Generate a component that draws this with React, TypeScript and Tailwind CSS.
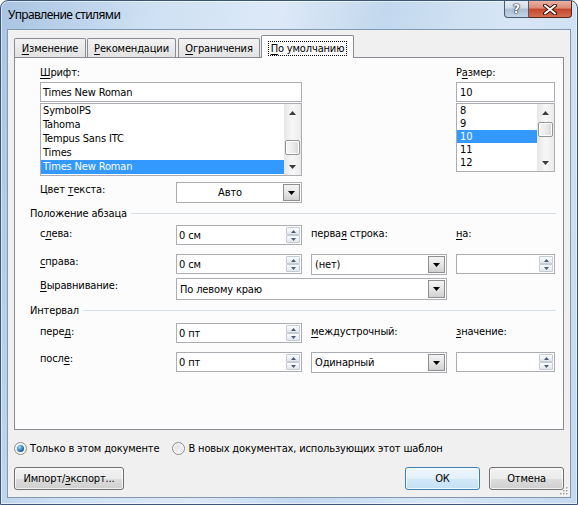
import React from 'react';

const F = "font-['DejaVu_Sans_Condensed','Liberation_Sans',sans-serif]";

function U({ children }: { children: React.ReactNode }) {
  return <span className="underline decoration-1 underline-offset-[2px]">{children}</span>;
}

function Tri({ up, w = 7, h = 4, color = '#000' }: { up?: boolean; w?: number; h?: number; color?: string }) {
  return (
    <svg width={w} height={h} viewBox={`0 0 ${w} ${h}`}>
      <path d={up ? `M${w / 2} 0L${w} ${h}H0z` : `M0 0H${w}L${w / 2} ${h}z`} fill={color} />
    </svg>
  );
}

function SpinBtn({ up }: { up?: boolean }) {
  return (
    <div className="flex-1 border border-[#c3cbd6] rounded-[1px] bg-gradient-to-b from-[#fbfcfd] to-[#e2e7ed] flex items-center justify-center">
      <Tri up={up} w={5} h={3} color="#4c5b7a" />
    </div>
  );
}

function Spin({ value, w }: { value?: string; w: string }) {
  return (
    <div className={`${w} h-[20px] border border-[#abadb3] bg-white flex`}>
      <div className="flex-1 pl-[2px] flex items-center leading-[13px]">{value}</div>
      <div className="w-[15px] flex flex-col p-[1px] pl-0">
        <SpinBtn up />
        <SpinBtn />
      </div>
    </div>
  );
}

function Combo({ value, w, h, center }: { value: string; w: string; h: string; center?: boolean }) {
  return (
    <div className={`${w} ${h} border border-[#abadb3] bg-white flex`}>
      <div className={`flex-1 flex items-center px-[3px] leading-[13px] ${center ? 'justify-center' : ''}`}>{value}</div>
      <div className="w-[17px] m-[1px] ml-0 border border-[#8e8f8f] bg-gradient-to-b from-[#f4f4f4] via-[#e6e6e6] to-[#d0d0d0] flex items-center justify-center">
        <Tri w={7} h={4} />
      </div>
    </div>
  );
}

function Scroll({ thumb }: { thumb: string }) {
  return (
    <div className="w-[17px] flex flex-col bg-gradient-to-r from-[#e6e6e6] via-[#f7f7f7] to-[#ebebeb]">
      <div className="h-[17px] flex items-center justify-center">
        <Tri up w={7} h={4} color="#3d3d3d" />
      </div>
      <div className="flex-1 relative">
        <div className={`absolute left-[1px] right-[1px] ${thumb} rounded-[2px] border border-[#959595] bg-gradient-to-r from-[#f6f6f6] via-[#ececec] to-[#d5d5d5] shadow-[inset_0_0_0_1px_#ffffff]`} />
      </div>
      <div className="h-[17px] flex items-center justify-center">
        <Tri w={7} h={4} color="#3d3d3d" />
      </div>
    </div>
  );
}

function Radio({ checked }: { checked?: boolean }) {
  return (
    <span className="w-[13px] h-[13px] rounded-full border border-[#8b8b8b] bg-gradient-to-br from-[#dcdcdc] to-[#fbfbfb] flex items-center justify-center shadow-[inset_0_0_0_1px_#ffffff]">
      {checked && (
        <span className="w-[7px] h-[7px] rounded-full bg-[radial-gradient(circle_at_35%_30%,#9adcff,#2a78b8_55%,#0c3b66)]" />
      )}
    </span>
  );
}

function Btn({ children, w, def }: { children: React.ReactNode; w: string; def?: boolean }) {
  return (
    <div
      className={`${w} h-[23px] rounded-[3px] border flex items-center justify-center leading-[13px] shadow-[inset_0_0_0_1px_rgba(255,255,255,0.75)] ${
        def
          ? 'border-[#3c7fb1] bg-[linear-gradient(#eef7fe,#e2f0fb_50%,#d1e8f8_50%,#c6e1f5)]'
          : 'border-[#707070] bg-[linear-gradient(#f2f2f2,#ebebeb_50%,#dddddd_50%,#cfcfcf)]'
      }`}
    >
      {children}
    </div>
  );
}

function Tab({ children, w, ml, selected }: { children: React.ReactNode; w: string; ml: string; selected?: boolean }) {
  if (selected) {
    return (
      <div className={`${w} ${ml} h-[23px] -mb-px relative z-10 border border-b-0 border-[#898c95] rounded-t-[2px] bg-[#fcfcfc] flex items-start justify-center pt-[5px]`}>
        <span className="border border-dotted border-[#000] px-[2px] leading-[13px]">{children}</span>
      </div>
    );
  }
  return (
    <div className={`${w} ${ml} h-[19px] border border-b-0 border-[#898c95] rounded-t-[2px] bg-gradient-to-b from-[#f3f3f3] to-[#e2e2e2] flex items-center justify-center leading-[13px]`}>
      {children}
    </div>
  );
}

const fonts = ['SymbolPS', 'Tahoma', 'Tempus Sans ITC', 'Times', 'Times New Roman'];
const sizes = ['8', '9', '10', '11', '12'];

export default function App() {
  return (
    <div className={`${F} text-[11px] tracking-[-0.15px] text-black w-[578px] h-[505px] bg-white`}>
      <div className="w-[578px] h-[505px] rounded-t-[8px] border border-[#3a5678] bg-[linear-gradient(100deg,#a9c4e2_0%,#cde0f3_22%,#dde9f7_42%,#c2d8ee_58%,#d8e7f6_78%,#c4d9ef_100%)] shadow-[inset_0_0_0_1px_rgba(255,255,255,0.55)] flex flex-col">
        {/* Title bar */}
        <div className="h-[28px] flex items-start">
          <div className="h-[28px] pl-[7px] pb-[1px] flex items-center font-['Noto_Sans',sans-serif] text-[12px] tracking-[-0.6px] text-black">Управление стилями</div>
          <div className="ml-auto mr-[5px] flex">
            <div className="w-[25px] h-[17px] rounded-bl-[4px] border border-t-0 border-[#4b5b70] bg-[linear-gradient(#e5edf6,#cfdbe8_45%,#a9bdd3_50%,#c3d5e8)] flex items-center justify-center">
              <span className="font-['DejaVu_Sans',sans-serif] font-bold text-[12px] leading-[12px] text-white [text-shadow:0_0_1px_#223,0_0_1px_#223,0_0_2px_#334]">?</span>
            </div>
            <div className="w-[43px] h-[17px] rounded-br-[4px] border border-l-0 border-t-0 border-[#5a2418] bg-[linear-gradient(#eab1a3,#dc8a77_45%,#c4452b_50%,#d36f52)] flex items-center justify-center">
              <svg width="14" height="11" viewBox="0 0 14 11">
                <path d="M2 1.5L12 9.5M12 1.5L2 9.5" stroke="#3a1208" strokeWidth="4" strokeLinecap="round" />
                <path d="M2 1.5L12 9.5M12 1.5L2 9.5" stroke="#ffffff" strokeWidth="2" strokeLinecap="round" />
              </svg>
            </div>
          </div>
        </div>

        {/* Client area */}
        <div className="flex-1 mx-[6px] mb-[6px] border border-[#8298b0] bg-[#f0f0f0] relative pt-[5px] pl-[6px] pr-[6px] flex flex-col">
          {/* Tabs */}
          <div className="h-[22px] flex items-end">
            <Tab w="w-[72px]" ml="ml-0">
              <U>И</U>зменение
            </Tab>
            <Tab w="w-[89px]" ml="ml-[1px]">
              <U>Р</U>екомендации
            </Tab>
            <Tab w="w-[82px]" ml="ml-[2px]">
              <U>О</U>граничения
            </Tab>
            <Tab w="w-[93px]" ml="ml-[1px]" selected>
              <U>П</U>о умолчанию
            </Tab>
          </div>

          {/* Panel */}
          <div className="w-[550px] h-[373px] border border-[#898c95] bg-[#fcfcfc] pl-[15px] pr-[7px] pt-[8px] flex flex-col">
            {/* Font + size */}
            <div className="flex ml-[10px]">
              <div className="w-[262px] flex flex-col">
                <div className="h-[13px] leading-[13px]">
                  <U>Ш</U>рифт:
                </div>
                <div className="mt-[3px] h-[20px] border border-[#abadb3] bg-white pl-[2px] flex items-center leading-[13px]">Times New Roman</div>
                <div className="mt-[1px] h-[73px] border border-[#abadb3] bg-white flex">
                  <div className="flex-1 flex flex-col">
                    {fonts.map((f) => (
                      <div key={f} className={`h-[14px] leading-[14px] pl-[2px] ${f === 'Times New Roman' ? 'bg-[#3399ff] text-white' : ''}`}>
                        {f}
                      </div>
                    ))}
                  </div>
                  <Scroll thumb="top-[19px] h-[15px]" />
                </div>
              </div>
              <div className="ml-[154px] w-[99px] flex flex-col">
                <div className="h-[13px] leading-[13px]">
                  Р<U>а</U>змер:
                </div>
                <div className="mt-[3px] h-[20px] border border-[#abadb3] bg-white pl-[3px] flex items-center leading-[13px]">10</div>
                <div className="mt-[1px] h-[69px] border border-[#abadb3] bg-white flex">
                  <div className="flex-1 flex flex-col">
                    {sizes.map((s) => (
                      <div key={s} className={`h-[13px] leading-[13px] pl-[3px] ${s === '10' ? 'bg-[#3399ff] text-white' : ''}`}>
                        {s}
                      </div>
                    ))}
                  </div>
                  <Scroll thumb="top-[1px] h-[15px]" />
                </div>
              </div>
            </div>

            {/* Text colour */}
            <div className="mt-[6px] ml-[10px] flex items-start">
              <div className="w-[136px] mt-[1px] leading-[13px]">
                Цвет <U>т</U>екста:
              </div>
              <Combo value="Авто" w="w-[126px]" h="h-[21px]" center />
            </div>

            {/* Paragraph position */}
            <div className="mt-[4px] h-[13px] flex items-center">
              <span className="leading-[13px]">Положение абзаца</span>
              <div className="flex-1 ml-[4px] h-px bg-[#d5dfe5]" />
            </div>
            <div className="mt-[5px] ml-[10px] flex items-start">
              <div className="w-[136px] mt-[2px] leading-[13px]">
                с<U>л</U>ева:
              </div>
              <Spin w="w-[126px]" value="0 см" />
              <div className="ml-[9px] w-[136px] mt-[2px] leading-[13px]">
                перва<U>я</U> строка:
              </div>
              <div className="ml-[9px] mt-[2px] leading-[13px]">
                <U>н</U>а:
              </div>
            </div>
            <div className="mt-[9px] ml-[10px] flex items-start">
              <div className="w-[136px] mt-[1px] leading-[13px]">
                <U>с</U>права:
              </div>
              <Spin w="w-[126px]" value="0 см" />
              <div className="ml-[9px]">
                <Combo value="(нет)" w="w-[136px]" h="h-[21px]" />
              </div>
              <div className="ml-[9px]">
                <Spin w="w-[99px]" />
              </div>
            </div>
            <div className="mt-[3px] ml-[10px] flex items-start">
              <div className="w-[136px] mt-[1px] leading-[13px]">
                <U>В</U>ыравнивание:
              </div>
              <Combo value="По левому краю" w="w-[271px]" h="h-[22px]" />
            </div>

            {/* Spacing */}
            <div className="mt-[4px] h-[13px] flex items-center">
              <span className="leading-[13px]">Интервал</span>
              <div className="flex-1 ml-[4px] h-px bg-[#d5dfe5]" />
            </div>
            <div className="mt-[6px] ml-[10px] flex items-start">
              <div className="w-[136px] mt-[2px] leading-[13px]">
                пере<U>д</U>:
              </div>
              <Spin w="w-[126px]" value="0 пт" />
              <div className="ml-[9px] w-[136px] mt-[2px] leading-[13px]">
                <U>м</U>еждустрочный:
              </div>
              <div className="ml-[9px] mt-[2px] leading-[13px]">
                <U>з</U>начение:
              </div>
            </div>
            <div className="mt-[9px] ml-[10px] flex items-start">
              <div className="w-[136px] leading-[13px]">
                посл<U>е</U>:
              </div>
              <Spin w="w-[126px]" value="0 пт" />
              <div className="ml-[9px]">
                <Combo value="Одинарный" w="w-[136px]" h="h-[21px]" />
              </div>
              <div className="ml-[9px]">
                <Spin w="w-[99px]" />
              </div>
            </div>
          </div>

          {/* Radios */}
          <div className="mt-[12px] h-[13px] flex items-center">
            <Radio checked />
            <span className="ml-[3px] leading-[13px]">Только в этом документе</span>
            <span className="ml-[13px]">
              <Radio />
            </span>
            <span className="ml-[3px] leading-[13px]">В новых документах, использующих этот шаблон</span>
          </div>

          {/* Buttons */}
          <div className="mt-[12px] flex items-start">
            <Btn w="w-[110px]">
              Импорт/<U>э</U>кспорт...
            </Btn>
            <div className="ml-auto flex gap-[9px]">
              <Btn w="w-[75px]" def>
                ОК
              </Btn>
              <Btn w="w-[75px]">Отмена</Btn>
            </div>
          </div>

          {/* Resize grip */}
          <svg className="absolute right-[1px] bottom-[1px]" width="10" height="10" viewBox="0 0 10 10">
            {[
              [8, 2],
              [8, 5],
              [5, 5],
              [8, 8],
              [5, 8],
              [2, 8],
            ].map(([x, y]) => (
              <g key={`${x}-${y}`}>
                <rect x={x} y={y} width="1.5" height="1.5" fill="#ffffff" />
                <rect x={x - 1} y={y - 1} width="1.5" height="1.5" fill="#a0a0a0" />
              </g>
            ))}
          </svg>
        </div>
      </div>
    </div>
  );
}
